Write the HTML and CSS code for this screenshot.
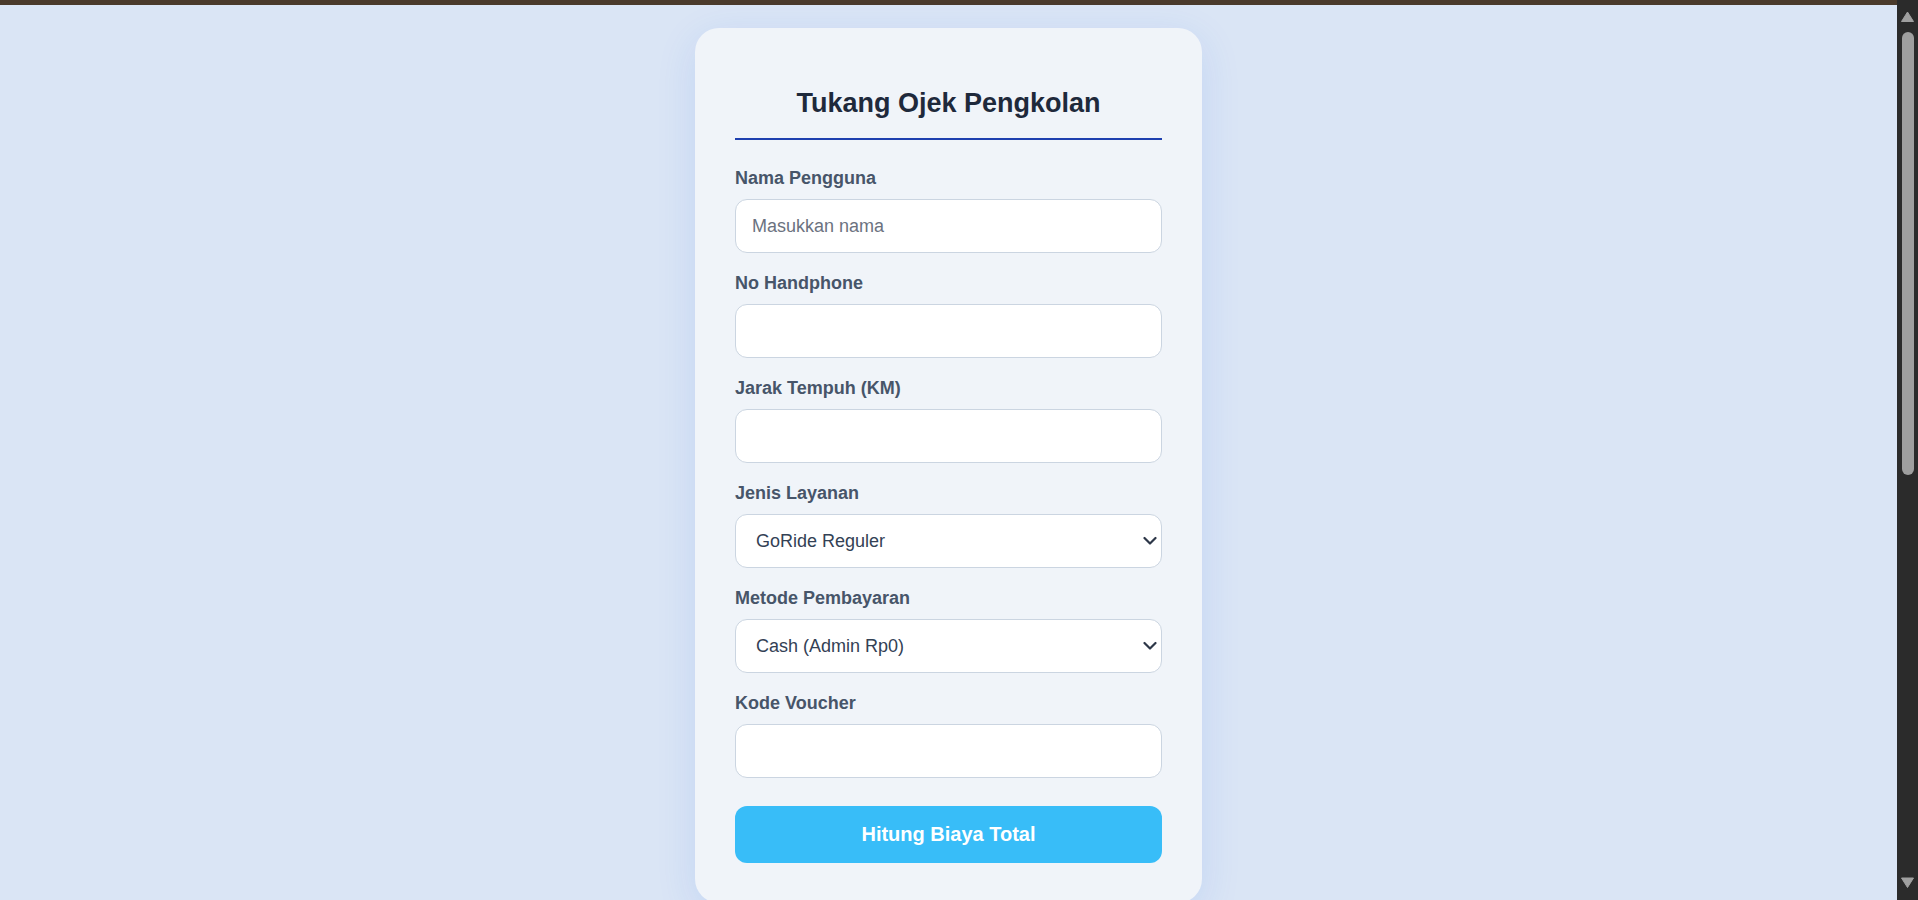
FILE: index.html
```html
<!DOCTYPE html>
<html lang="id">
<head>
    <meta charset="UTF-8">
    <meta name="viewport" content="width=device-width, initial-scale=1.0">
    <title>Tukang Ojek Pengkolan</title>
    <link rel="stylesheet" href="styles.css">
</head>
<body>
    <div class="page">
        <div class="top-bar"></div>

        <div class="card">
            <h1 class="card-title">Tukang Ojek Pengkolan</h1>

            <form id="ojek-form">
                <div class="form-group">
                    <label for="nama">Nama Pengguna</label>
                    <input type="text" class="form-control" id="nama" placeholder="Masukkan nama">
                </div>

                <div class="form-group">
                    <label for="hp">No Handphone</label>
                    <input type="text" class="form-control" id="hp">
                </div>

                <div class="form-group">
                    <label for="jarak">Jarak Tempuh (KM)</label>
                    <input type="text" class="form-control" id="jarak">
                </div>

                <div class="form-group">
                    <label for="layanan">Jenis Layanan</label>
                    <div class="select-wrap">
                        <select class="form-control" id="layanan">
                            <option value="reguler">GoRide Reguler</option>
                            <option value="comfort">GoRide Comfort</option>
                        </select>
                        <svg class="chevron" width="14" height="9" viewBox="0 0 14 9">
                            <path d="M1.5 1.5 L7 7 L12.5 1.5" fill="none" stroke="#2d3748" stroke-width="2.2" stroke-linecap="round" stroke-linejoin="round"/>
                        </svg>
                    </div>
                </div>

                <div class="form-group">
                    <label for="bayar">Metode Pembayaran</label>
                    <div class="select-wrap">
                        <select class="form-control" id="bayar">
                            <option value="cash">Cash (Admin Rp0)</option>
                            <option value="gopay">GoPay (Admin Rp1000)</option>
                        </select>
                        <svg class="chevron" width="14" height="9" viewBox="0 0 14 9">
                            <path d="M1.5 1.5 L7 7 L12.5 1.5" fill="none" stroke="#2d3748" stroke-width="2.2" stroke-linecap="round" stroke-linejoin="round"/>
                        </svg>
                    </div>
                </div>

                <div class="form-group">
                    <label for="voucher">Kode Voucher</label>
                    <input type="text" class="form-control" id="voucher">
                </div>

                <button type="button" class="btn">Hitung Biaya Total</button>
            </form>
        </div>
    </div>

    <div class="scrollbar">
        <svg class="scroll-arrow" width="21" height="28" viewBox="0 0 21 28">
            <path d="M10.5 12 L16.5 21.5 L4.5 21.5 Z" fill="#a0a0a0" stroke="#a0a0a0" stroke-width="1" stroke-linejoin="round"/>
        </svg>
        <div class="scroll-track">
            <div class="scroll-thumb"></div>
        </div>
        <svg class="scroll-arrow" width="21" height="28" viewBox="0 0 21 28">
            <path d="M4.5 6 L16.5 6 L10.5 15.5 Z" fill="#a0a0a0" stroke="#a0a0a0" stroke-width="1" stroke-linejoin="round"/>
        </svg>
    </div>
</body>
</html>
```

FILE: styles.css
```css
:root {
    --background: #dae5f5;
    --card: #f0f4f9;
    --title: #1e293b;
    --label: #475569;
    --border: #cbd5e1;
    --line: #1e40af;
    --button: #38bdf8;
    --scroll-bg: #2b2b2b;
    --scroll-thumb: #9f9f9f;
    --white: #FFFFFF;
}

* {
    margin: 0;
    padding: 0;
    box-sizing: border-box;
    font-family: 'Liberation Sans', Arial, sans-serif;
}

body {
    display: flex;
    height: 100vh;
    overflow: hidden;
    background-color: var(--background);
    color: var(--title);
}

.page {
    flex: 1;
    overflow: hidden;
}

.top-bar {
    height: 5px;
    background-color: #4a3a2b;
}

.card {
    width: 507px;
    margin: 23px auto 0;
    padding: 40px;
    background-color: var(--card);
    border-radius: 24px;
    box-shadow: 0 10px 40px rgba(37, 99, 235, 0.12);
}

.card-title {
    margin: 20px 0 28px;
    padding-bottom: 19px;
    border-bottom: 2px solid var(--line);
    text-align: center;
    font-size: 27px;
    color: var(--title);
}

.form-group {
    margin-bottom: 20px;
}

.form-group label {
    display: block;
    margin-bottom: 10px;
    font-size: 18px;
    font-weight: bold;
    color: var(--label);
}

.form-control {
    display: block;
    width: 100%;
    height: 54px;
    padding: 0 16px;
    font-size: 18px;
    color: #334155;
    background-color: var(--white);
    border: 1px solid var(--border);
    border-radius: 12px;
    appearance: none;
}

select.form-control {
    padding-left: 20px;
}

.form-control::placeholder {
    color: #6b7280;
}

.form-control:focus {
    outline: none;
    border-color: var(--button);
}

.select-wrap {
    position: relative;
}

.chevron {
    position: absolute;
    right: 5px;
    top: 50%;
    transform: translateY(-50%);
    pointer-events: none;
}

.btn {
    display: block;
    width: 100%;
    margin-top: 28px;
    height: 57px;
    font-size: 20px;
    font-weight: bold;
    color: var(--white);
    background-color: var(--button);
    border: none;
    border-radius: 12px;
    cursor: pointer;
}

.btn:hover {
    background-color: #0ea5e9;
}

.scrollbar {
    display: flex;
    flex-direction: column;
    width: 21px;
    background-color: var(--scroll-bg);
}

.scroll-arrow {
    display: block;
    flex-shrink: 0;
}

.scroll-track {
    flex: 1;
    padding: 4px 4px 0 5px;
}

.scroll-thumb {
    height: 443px;
    background-color: var(--scroll-thumb);
    border-radius: 6px;
}
```
